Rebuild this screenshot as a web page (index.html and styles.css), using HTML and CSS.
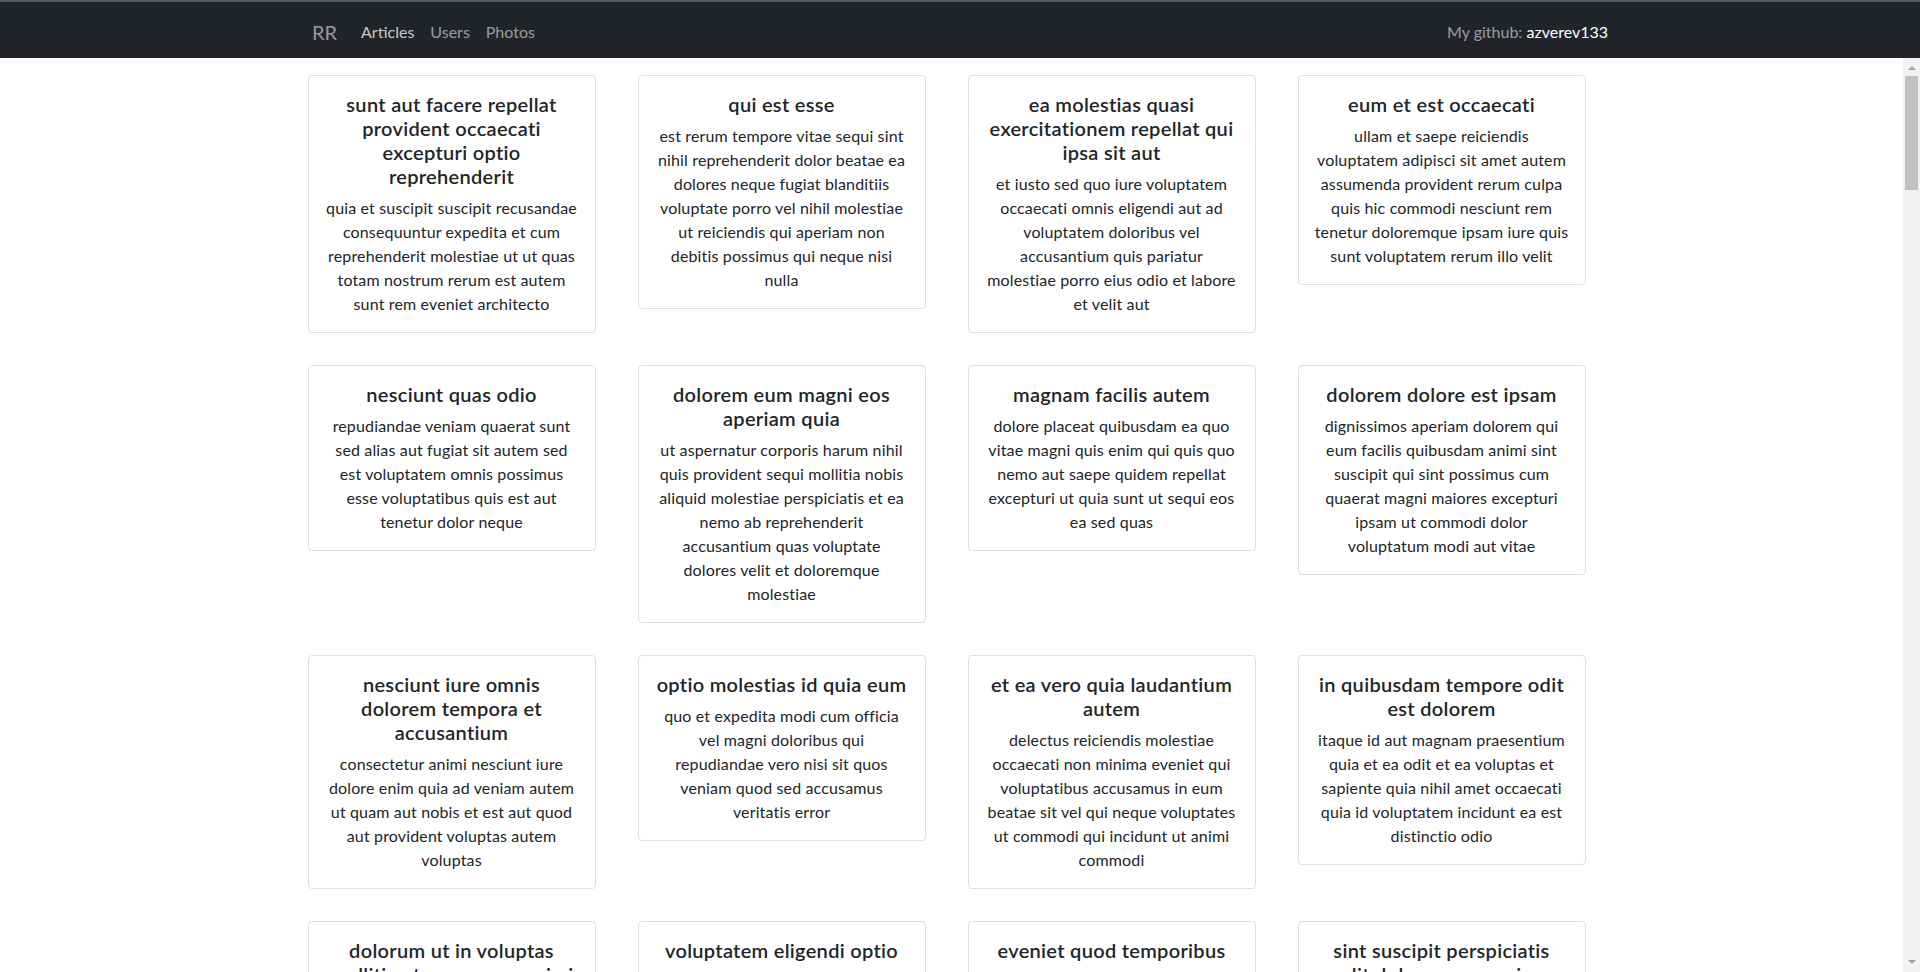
FILE: index.html
```html
<!DOCTYPE html>
<html lang="en">
<head>
<meta charset="utf-8">
<title>RR</title>
<link rel="stylesheet" href="styles.css">
</head>
<body>
<nav class="navbar">
  <div class="nav-container">
    <div class="nav-left">
      <a class="brand" href="#">RR</a>
      <a class="nav-link active" href="#">Articles</a>
      <a class="nav-link" href="#">Users</a>
      <a class="nav-link" href="#">Photos</a>
    </div>
    <div class="nav-right">My github: <a class="gh" href="#">azverev133</a></div>
  </div>
</nav>
<div class="viewport">
<main class="main">
  <div class="container">
    <div class="posts">
      <div class="card"><h5 class="card-title">sunt aut facere repellat provident occaecati excepturi optio reprehenderit</h5><p class="card-text">quia et suscipit suscipit recusandae consequuntur expedita et cum reprehenderit molestiae ut ut quas totam nostrum rerum est autem sunt rem eveniet architecto</p></div>
      <div class="card"><h5 class="card-title">qui est esse</h5><p class="card-text">est rerum tempore vitae sequi sint nihil reprehenderit dolor beatae ea dolores neque fugiat blanditiis voluptate porro vel nihil molestiae ut reiciendis qui aperiam non debitis possimus qui neque nisi nulla</p></div>
      <div class="card"><h5 class="card-title">ea molestias quasi exercitationem repellat qui ipsa sit aut</h5><p class="card-text">et iusto sed quo iure voluptatem occaecati omnis eligendi aut ad voluptatem doloribus vel accusantium quis pariatur molestiae porro eius odio et labore et velit aut</p></div>
      <div class="card"><h5 class="card-title">eum et est occaecati</h5><p class="card-text">ullam et saepe reiciendis voluptatem adipisci sit amet autem assumenda provident rerum culpa quis hic commodi nesciunt rem tenetur doloremque ipsam iure quis sunt voluptatem rerum illo velit</p></div>
      <div class="card"><h5 class="card-title">nesciunt quas odio</h5><p class="card-text">repudiandae veniam quaerat sunt sed alias aut fugiat sit autem sed est voluptatem omnis possimus esse voluptatibus quis est aut tenetur dolor neque</p></div>
      <div class="card"><h5 class="card-title">dolorem eum magni eos aperiam quia</h5><p class="card-text">ut aspernatur corporis harum nihil quis provident sequi mollitia nobis aliquid molestiae perspiciatis et ea nemo ab reprehenderit accusantium quas voluptate dolores velit et doloremque molestiae</p></div>
      <div class="card"><h5 class="card-title">magnam facilis autem</h5><p class="card-text">dolore placeat quibusdam ea quo vitae magni quis enim qui quis quo nemo aut saepe quidem repellat excepturi ut quia sunt ut sequi eos ea sed quas</p></div>
      <div class="card"><h5 class="card-title">dolorem dolore est ipsam</h5><p class="card-text">dignissimos aperiam dolorem qui eum facilis quibusdam animi sint suscipit qui sint possimus cum quaerat magni maiores excepturi ipsam ut commodi dolor voluptatum modi aut vitae</p></div>
      <div class="card"><h5 class="card-title">nesciunt iure omnis dolorem tempora et accusantium</h5><p class="card-text">consectetur animi nesciunt iure dolore enim quia ad veniam autem ut quam aut nobis et est aut quod aut provident voluptas autem voluptas</p></div>
      <div class="card"><h5 class="card-title">optio molestias id quia eum</h5><p class="card-text">quo et expedita modi cum officia vel magni doloribus qui repudiandae vero nisi sit quos veniam quod sed accusamus veritatis error</p></div>
      <div class="card"><h5 class="card-title">et ea vero quia laudantium autem</h5><p class="card-text">delectus reiciendis molestiae occaecati non minima eveniet qui voluptatibus accusamus in eum beatae sit vel qui neque voluptates ut commodi qui incidunt ut animi commodi</p></div>
      <div class="card"><h5 class="card-title">in quibusdam tempore odit est dolorem</h5><p class="card-text">itaque id aut magnam praesentium quia et ea odit et ea voluptas et sapiente quia nihil amet occaecati quia id voluptatem incidunt ea est distinctio odio</p></div>
      <div class="card"><h5 class="card-title">dolorum ut in voluptas mollitia et saepe quo animi</h5><p class="card-text">aut dicta possimus sint mollitia voluptas commodi quo doloremque iste corrupti reiciendis voluptatem eius rerum sit cumque quod eligendi laborum minima perferendis recusandae assumenda consectetur porro architecto ipsum ipsam</p></div>
      <div class="card"><h5 class="card-title">voluptatem eligendi optio</h5><p class="card-text">fuga et accusamus dolorum perferendis illo voluptas non doloremque neque facere ad qui dolorum molestiae beatae sed aut voluptas totam sit illum</p></div>
      <div class="card"><h5 class="card-title">eveniet quod temporibus</h5><p class="card-text">reprehenderit quos placeat velit minima officia dolores impedit repudiandae molestiae nam voluptas recusandae quis delectus officiis harum fugiat vitae</p></div>
      <div class="card"><h5 class="card-title">sint suscipit perspiciatis velit dolorum rerum ipsa laboriosam odio</h5><p class="card-text">suscipit nam nisi quo aperiam aut asperiores eos fugit maiores voluptatibus quia voluptatem quis ullam qui in alias quia est consequatur magni mollitia accusamus ea nisi voluptate dicta</p></div>
      <div class="card"><h5 class="card-title">fugit voluptas sed molestias voluptatem provident</h5><p class="card-text">eos voluptas et aut odit natus earum aspernatur fuga molestiae ullam deserunt ratione qui eos qui nihil ratione nemo velit ut aut id quo</p></div>
      <div class="card"><h5 class="card-title">voluptate et itaque vero tempora molestiae</h5><p class="card-text">eveniet quo quis laborum totam consequatur non dolor ut et est repudiandae est voluptatem vel debitis et magnam</p></div>
      <div class="card"><h5 class="card-title">adipisci placeat illum aut reiciendis qui</h5><p class="card-text">illum quis cupiditate provident sit magnam ea sed aut omnis veniam maiores ullam consequatur atque adipisci quo iste expedita sit quos voluptas</p></div>
      <div class="card"><h5 class="card-title">doloribus ad provident suscipit at</h5><p class="card-text">qui consequuntur ducimus possimus quisquam amet similique suscipit porro ipsam amet eos veritatis officiis exercitationem vel fugit aut necessitatibus totam omnis rerum consequatur expedita quidem cumque explicabo</p></div>
      <div class="card"><h5 class="card-title">asperiores ea ipsam voluptatibus modi minima quia sint</h5><p class="card-text">repellat aliquid praesentium dolorem quo sed totam minus non itaque nihil labore molestiae sunt dolor eveniet hic recusandae veniam tempora et tenetur expedita sunt</p></div>
      <div class="card"><h5 class="card-title">dolor sint quo a velit explicabo quia nam</h5><p class="card-text">eos qui et ipsum ipsam suscipit aut sed omnis non odio expedita earum mollitia molestiae aut atque rem suscipit nam impedit esse</p></div>
      <div class="card"><h5 class="card-title">maxime id vitae nihil numquam</h5><p class="card-text">veritatis unde neque eligendi quae quod architecto quo neque vitae est illo sit tempora doloremque fugit quod et et vel beatae sequi ullam sed tenetur perspiciatis</p></div>
      <div class="card"><h5 class="card-title">autem hic labore sunt dolores incidunt</h5><p class="card-text">enim et ex nulla omnis voluptas quia qui voluptatem consequatur numquam aliquam sunt totam recusandae id dignissimos aut sed asperiores deserunt</p></div>
      <div class="card"><h5 class="card-title">rem alias distinctio quo quis</h5><p class="card-text">ullam consequatur ut omnis quis sit vel consequuntur ipsa eligendi ipsum molestiae et omnis error nostrum molestiae illo tempore quia et distinctio</p></div>
      <div class="card"><h5 class="card-title">est et quae odit qui non</h5><p class="card-text">similique esse doloribus nihil accusamus omnis dolorem fuga consequuntur reprehenderit fugit recusandae temporibus perspiciatis cum ut laudantium omnis aut molestiae vel vero</p></div>
      <div class="card"><h5 class="card-title">quasi id et eos tenetur aut quo autem</h5><p class="card-text">eum sed dolores ipsam sint possimus debitis occaecati debitis qui qui et ut placeat enim earum aut odit facilis consequatur suscipit necessitatibus rerum sed inventore temporibus consequatur</p></div>
      <div class="card"><h5 class="card-title">delectus ullam et corporis nulla voluptas sequi</h5><p class="card-text">non et quaerat ex quae ad maiores maiores recusandae totam aut blanditiis mollitia quas illo ut voluptatibus voluptatem similique nostrum eum</p></div>
      <div class="card"><h5 class="card-title">iusto eius quod necessitatibus culpa ea</h5><p class="card-text">odit magnam ut saepe sed non qui tempora atque nihil accusamus illum doloribus illo dolor eligendi repudiandae odit magni similique sed cum maiores</p></div>
      <div class="card"><h5 class="card-title">a quo magni similique perferendis</h5><p class="card-text">alias dolor cumque impedit blanditiis non eveniet odio maxime blanditiis amet eius quis tempora quia autem rem a provident perspiciatis quia</p></div>
      <div class="card"><h5 class="card-title">ullam ut quidem id aut vel consequuntur</h5><p class="card-text">debitis eius sed quibusdam non quis consectetur vitae impedit ut qui consequatur sed aut in quidem sit nostrum et maiores adipisci atque quaerat voluptatem adipisci repudiandae</p></div>
      <div class="card"><h5 class="card-title">doloremque illum aliquid sunt</h5><p class="card-text">deserunt eos nobis asperiores et hic est debitis repellat molestiae optio nihil ratione ut eos beatae quibusdam distinctio maiores earum voluptates et aut adipisci ea maiores voluptas maxime</p></div>
      <div class="card"><h5 class="card-title">qui explicabo molestiae dolorem</h5><p class="card-text">rerum ut et numquam laborum odit est sit id qui sint in quasi tenetur tempore aperiam et quaerat qui in rerum officiis sequi cumque quod</p></div>
      <div class="card"><h5 class="card-title">magnam ut rerum iure</h5><p class="card-text">ea velit perferendis earum ut voluptatem voluptate itaque iusto totam pariatur in nemo voluptatem voluptatem autem magni tempora minima in est distinctio qui assumenda accusamus dignissimos officia nesciunt nobis</p></div>
      <div class="card"><h5 class="card-title">id nihil consequatur molestias animi provident</h5><p class="card-text">nisi error delectus possimus ut eligendi vitae placeat eos harum cupiditate facilis reprehenderit voluptatem beatae modi ducimus quo illum voluptas eligendi et nobis quia fugit</p></div>
      <div class="card"><h5 class="card-title">fuga nam accusamus voluptas reiciendis itaque</h5><p class="card-text">ad mollitia et omnis minus architecto odit voluptas doloremque maxime aut non ipsa qui alias veniam blanditiis culpa aut quia nihil cumque facere et occaecati qui aspernatur quia eaque ut aperiam inventore</p></div>
      <div class="card"><h5 class="card-title">provident vel ut sit ratione est</h5><p class="card-text">debitis et eaque non officia sed nesciunt pariatur vel voluptatem iste vero et ea numquam aut expedita ipsum nulla in voluptates omnis consequatur aut enim officiis in quam qui</p></div>
      <div class="card"><h5 class="card-title">explicabo et eos deleniti nostrum ab id repellendus</h5><p class="card-text">animi esse sit aut sit nesciunt assumenda eum voluptas quia voluptatibus provident quia necessitatibus ea rerum repudiandae quia voluptatem delectus fugit aut id quia ratione optio eos iusto veniam iure</p></div>
      <div class="card"><h5 class="card-title">eos dolorem iste accusantium est eaque quam</h5><p class="card-text">corporis rerum ducimus vel eum accusantium maxime aspernatur a porro possimus iste omnis est in deleniti asperiores fuga aut voluptas sapiente vel dolore minus voluptatem incidunt ex</p></div>
      <div class="card"><h5 class="card-title">enim quo cumque</h5><p class="card-text">ut voluptatum aliquid illo tenetur nemo sequi quo facilis ipsum rem optio mollitia quas voluptatem eum voluptas qui unde omnis voluptatem iure quasi maxime voluptas nam</p></div>
      <div class="card"><h5 class="card-title">non est facere</h5><p class="card-text">molestias id nostrum excepturi molestiae dolore omnis repellendus quaerat saepe consectetur iste quaerat tenetur asperiores accusamus ex ut nam quidem est ducimus sunt debitis saepe</p></div>
      <div class="card"><h5 class="card-title">commodi ullam sint et excepturi error explicabo praesentium voluptas</h5><p class="card-text">odio fugit voluptatum ducimus earum autem est incidunt voluptatem odit reiciendis aliquam sunt sequi nulla dolorem non facere repellendus voluptates quia ratione harum vitae ut</p></div>
      <div class="card"><h5 class="card-title">eligendi iste nostrum consequuntur adipisci praesentium sit beatae perferendis</h5><p class="card-text">similique fugit est illum et dolorum harum et voluptate eaque quidem exercitationem quos nam commodi possimus cum odio nihil nulla dolorum exercitationem magnam ex et a et distinctio debitis</p></div>
      <div class="card"><h5 class="card-title">optio dolor molestias sit</h5><p class="card-text">temporibus est consectetur dolore et libero debitis vel velit laboriosam quia ipsum quibusdam qui itaque fuga rem aut ea et iure quam sed maxime ut distinctio quae</p></div>
      <div class="card"><h5 class="card-title">ut numquam possimus omnis eius suscipit laudantium iure</h5><p class="card-text">est natus reiciendis nihil possimus aut provident ex et dolor repellat pariatur est nobis rerum repellendus dolorem autem</p></div>
      <div class="card"><h5 class="card-title">aut quo modi neque nostrum ducimus</h5><p class="card-text">voluptatem quisquam iste voluptatibus natus officiis facilis dolorem quis quas ipsam vel et voluptatum in aliquid</p></div>
      <div class="card"><h5 class="card-title">quibusdam cumque rem aut deserunt</h5><p class="card-text">voluptatem assumenda ut qui ut cupiditate aut impedit veniam occaecati nemo illum voluptatem laudantium molestiae beatae rerum ea iure soluta nostrum eligendi et voluptate</p></div>
      <div class="card"><h5 class="card-title">ut voluptatem illum ea doloribus itaque eos</h5><p class="card-text">voluptates quo voluptatem facilis iure occaecati vel assumenda rerum officia et illum perspiciatis ab deleniti laudantium repellat ad ut et autem reprehenderit</p></div>
      <div class="card"><h5 class="card-title">laborum non sunt aut ut assumenda perspiciatis voluptas</h5><p class="card-text">inventore ab sint natus fugit id nulla sequi architecto nihil quaerat eos tenetur in in eum veritatis non quibusdam officiis aspernatur cumque aut commodi aut</p></div>
      <div class="card"><h5 class="card-title">repellendus qui recusandae incidunt voluptates tenetur qui omnis exercitationem</h5><p class="card-text">error suscipit maxime adipisci consequuntur recusandae voluptas eligendi et est et voluptates quia distinctio ab amet quaerat molestiae et vitae adipisci impedit sequi nesciunt quis consectetur</p></div>
      <div class="card"><h5 class="card-title">soluta aliquam aperiam consequatur illo quis voluptas</h5><p class="card-text">sunt dolores aut doloribus dolore doloribus voluptates tempora et doloremque et quo cum asperiores sit consectetur dolorem</p></div>
      <div class="card"><h5 class="card-title">qui enim et consequuntur quia animi quis voluptate quibusdam</h5><p class="card-text">iusto est quibusdam fuga quas quaerat molestias a enim ut sit accusamus enim temporibus iusto accusantium provident architecto soluta esse reprehenderit qui laborum</p></div>
      <div class="card"><h5 class="card-title">ut quo aut ducimus alias</h5><p class="card-text">minima harum praesentium eum rerum illo dolore quasi exercitationem rerum nam porro quis neque quo consequatur minus dolor quidem veritatis sunt non explicabo similique</p></div>
      <div class="card"><h5 class="card-title">sit asperiores ipsam eveniet odio non quia</h5><p class="card-text">totam corporis dignissimos vitae dolorem ut occaecati accusamus ex velit deserunt et exercitationem vero incidunt corrupti mollitia</p></div>
      <div class="card"><h5 class="card-title">sit vel voluptatem et non libero</h5><p class="card-text">debitis excepturi ea perferendis harum libero optio eos accusamus cum fuga ut sapiente repudiandae et ut incidunt omnis molestiae nihil ut eum odit</p></div>
      <div class="card"><h5 class="card-title">qui et at rerum necessitatibus</h5><p class="card-text">aut est omnis dolores neque rerum quod ea rerum velit pariatur beatae excepturi et provident voluptas corrupti corporis harum reprehenderit dolores eligendi</p></div>
      <div class="card"><h5 class="card-title">sed ab est est</h5><p class="card-text">at pariatur consequuntur earum quidem quo est laudantium soluta voluptatem qui ullam et est et cum voluptas voluptatum repellat est</p></div>
      <div class="card"><h5 class="card-title">voluptatum itaque dolores nisi et quasi</h5><p class="card-text">veniam voluptatum quae adipisci id et id quia eos ad et dolorem aliquam quo nisi sunt eos impedit error ad similique veniam</p></div>
      <div class="card"><h5 class="card-title">qui commodi dolor at maiores et quis id accusantium</h5><p class="card-text">perspiciatis et quam ea autem temporibus non voluptatibus qui beatae a earum officia nesciunt dolores suscipit voluptas et animi doloribus cum rerum quas et magni et hic ut ut commodi expedita sunt</p></div>
      <div class="card"><h5 class="card-title">consequatur placeat omnis quisquam quia reprehenderit fugit veritatis facere</h5><p class="card-text">asperiores sunt ab assumenda cumque modi velit qui esse omnis voluptate et fuga perferendis voluptas illo ratione amet aut et omnis</p></div>
      <div class="card"><h5 class="card-title">voluptatem doloribus consectetur est ut ducimus</h5><p class="card-text">ab nemo optio odio delectus tenetur corporis similique nobis repellendus rerum omnis facilis vero blanditiis debitis in nesciunt doloribus dicta dolores magnam minus velit</p></div>
      <div class="card"><h5 class="card-title">beatae enim quia vel</h5><p class="card-text">enim aspernatur illo distinctio quae praesentium beatae alias amet delectus qui voluptate distinctio odit sint accusantium autem omnis quo molestiae omnis ea eveniet optio</p></div>
      <div class="card"><h5 class="card-title">voluptas blanditiis repellendus animi ducimus error sapiente et suscipit</h5><p class="card-text">enim adipisci aspernatur nemo numquam omnis facere dolorem dolor ex quis temporibus incidunt ab delectus culpa quo reprehenderit blanditiis asperiores accusantium ut quam in voluptatibus voluptas ipsam dicta</p></div>
      <div class="card"><h5 class="card-title">et fugit quas eum in in aperiam quod</h5><p class="card-text">id velit blanditiis eum ea voluptatem molestiae sint occaecati est eos perspiciatis incidunt a error provident eaque aut aut qui</p></div>
      <div class="card"><h5 class="card-title">consequatur id enim sunt et et</h5><p class="card-text">voluptatibus ex esse sint explicabo est aliquid cumque adipisci fuga repellat labore molestiae corrupti ex saepe at asperiores et perferendis natus id esse incidunt pariatur</p></div>
      <div class="card"><h5 class="card-title">repudiandae ea animi iusto</h5><p class="card-text">officia veritatis tenetur vero qui itaque sint non ratione sed et ut asperiores iusto eos molestiae nostrum veritatis quibusdam et nemo iusto saepe</p></div>
      <div class="card"><h5 class="card-title">aliquid eos sed fuga est maxime repellendus</h5><p class="card-text">reprehenderit id nostrum voluptas doloremque pariatur sint et accusantium quia quod aspernatur et fugiat amet non sapiente et consequatur necessitatibus molestiae</p></div>
      <div class="card"><h5 class="card-title">odio quis facere architecto reiciendis optio</h5><p class="card-text">magnam molestiae perferendis quisquam qui cum reiciendis quaerat animi amet hic inventore ea quia deleniti quidem saepe porro velit</p></div>
      <div class="card"><h5 class="card-title">fugiat quod pariatur odit minima</h5><p class="card-text">officiis error culpa consequatur modi asperiores et dolorum assumenda voluptas et vel qui aut vel rerum voluptatum quisquam perspiciatis quia rerum consequatur totam quas sequi commodi repudiandae asperiores et saepe a</p></div>
      <div class="card"><h5 class="card-title">voluptatem laborum magni</h5><p class="card-text">sunt repellendus quae est asperiores aut deleniti esse accusamus repellendus quia aut quia dolorem unde eum tempora esse dolore</p></div>
      <div class="card"><h5 class="card-title">et iusto veniam et illum aut fuga</h5><p class="card-text">occaecati a doloribus iste saepe consectetur placeat eum voluptate dolorem et qui quo quia voluptas rerum ut id enim velit est perferendis</p></div>
      <div class="card"><h5 class="card-title">sint hic doloribus consequatur eos non id</h5><p class="card-text">quam occaecati qui deleniti consectetur consequatur aut facere quas exercitationem aliquam hic voluptas neque id sunt ut aut accusamus sunt consectetur expedita inventore velit</p></div>
      <div class="card"><h5 class="card-title">consequuntur deleniti eos quia temporibus ab aliquid at</h5><p class="card-text">voluptatem cumque tenetur consequatur expedita ipsum nemo quia explicabo aut eum minima consequatur tempore cumque quae est et et in consequuntur voluptatem voluptates aut</p></div>
      <div class="card"><h5 class="card-title">enim unde ratione doloribus quas enim ut sit sapiente</h5><p class="card-text">odit qui et et necessitatibus sint veniam mollitia amet doloremque molestiae commodi similique magnam et quam blanditiis est itaque quo et tenetur ratione occaecati molestiae tempora</p></div>
      <div class="card"><h5 class="card-title">dignissimos eum dolor ut enim et delectus in</h5><p class="card-text">commodi non non omnis et voluptas sit autem aut nobis magnam et sapiente voluptatem et laborum repellat qui delectus facilis temporibus rerum amet et nemo voluptate expedita adipisci error dolorem</p></div>
      <div class="card"><h5 class="card-title">doloremque officiis ad et non perferendis</h5><p class="card-text">ut animi facere totam iusto tempore molestiae eum aut et dolorem aperiam quaerat recusandae totam odio</p></div>
      <div class="card"><h5 class="card-title">necessitatibus quasi exercitationem odio</h5><p class="card-text">modi ut in nulla repudiandae dolorum nostrum eos aut consequatur omnis ut incidunt est omnis iste et quam voluptates sapiente aliquam asperiores nobis amet corrupti repudiandae provident</p></div>
      <div class="card"><h5 class="card-title">quam voluptatibus rerum veritatis</h5><p class="card-text">nobis facilis odit tempore cupiditate quia assumenda doloribus rerum qui ea illum et qui totam aut veniam repellendus</p></div>
      <div class="card"><h5 class="card-title">pariatur consequatur quia magnam autem omnis non amet</h5><p class="card-text">libero accusantium et et facere incidunt sit dolorem non excepturi qui quia sed laudantium quisquam molestiae ducimus est officiis esse molestiae iste et quos</p></div>
      <div class="card"><h5 class="card-title">labore in ex et explicabo corporis aut quas</h5><p class="card-text">ex quod dolorem ea eum iure qui provident amet quia qui facere excepturi et repudiandae asperiores molestias provident minus incidunt vero fugit rerum sint sunt excepturi provident</p></div>
      <div class="card"><h5 class="card-title">tempora rem veritatis voluptas quo dolores vero</h5><p class="card-text">facere qui nesciunt est voluptatum voluptatem nisi sequi eligendi necessitatibus ea at rerum itaque harum non ratione velit laboriosam quis consequuntur ex officiis minima doloremque voluptas ut aut</p></div>
      <div class="card"><h5 class="card-title">laudantium voluptate suscipit sunt enim enim</h5><p class="card-text">ut libero sit aut totam inventore sunt porro sint qui sunt molestiae consequatur cupiditate qui iste ducimus adipisci dolor enim assumenda soluta laboriosam amet iste delectus hic</p></div>
      <div class="card"><h5 class="card-title">odit et voluptates doloribus alias odio et</h5><p class="card-text">est molestiae facilis quis tempora numquam nihil qui voluptate sapiente consequatur est qui necessitatibus autem aut ipsa aperiam modi dolore numquam reprehenderit eius rem quibusdam</p></div>
      <div class="card"><h5 class="card-title">optio ipsam molestias necessitatibus occaecati facilis veritatis dolores aut</h5><p class="card-text">sint molestiae magni a et quos eaque et quasi ut rerum debitis similique veniam recusandae dignissimos dolor incidunt consequatur odio</p></div>
      <div class="card"><h5 class="card-title">dolore veritatis porro provident adipisci blanditiis et sunt</h5><p class="card-text">similique sed nisi voluptas iusto omnis mollitia et quo assumenda suscipit officia magnam sint sed tempora enim provident pariatur praesentium atque animi amet ratione</p></div>
      <div class="card"><h5 class="card-title">placeat quia et porro iste</h5><p class="card-text">quasi excepturi consequatur iste autem temporibus sed molestiae beatae et quaerat et esse ut voluptatem occaecati et vel explicabo autem asperiores pariatur deserunt optio</p></div>
      <div class="card"><h5 class="card-title">nostrum quis quasi placeat</h5><p class="card-text">eos et molestiae nesciunt ut a dolores perspiciatis repellendus repellat aliquid magnam sint rem ipsum est</p></div>
      <div class="card"><h5 class="card-title">sapiente omnis fugit eos</h5><p class="card-text">consequatur omnis est praesentium ducimus non iste neque hic deserunt voluptatibus veniam cum et rerum sed</p></div>
      <div class="card"><h5 class="card-title">sint soluta et vel magnam aut ut sed qui</h5><p class="card-text">repellat aut aperiam totam temporibus autem et architecto magnam ut consequatur qui cupiditate rerum quia soluta dignissimos nihil iure tempore quas est</p></div>
      <div class="card"><h5 class="card-title">ad iusto omnis odit dolor voluptatibus</h5><p class="card-text">minus omnis soluta quia qui sed adipisci voluptates illum ipsam voluptatem eligendi officia ut in eos soluta similique molestias praesentium blanditiis</p></div>
      <div class="card"><h5 class="card-title">aut amet sed</h5><p class="card-text">libero voluptate eveniet aperiam sed sunt placeat suscipit molestias similique fugit nam natus expedita consequatur consequatur dolores quia eos et placeat</p></div>
      <div class="card"><h5 class="card-title">ratione ex tenetur perferendis</h5><p class="card-text">aut et excepturi dicta laudantium sint rerum nihil laudantium et at a neque minima officia et similique libero et commodi voluptate qui</p></div>
      <div class="card"><h5 class="card-title">beatae soluta recusandae</h5><p class="card-text">dolorem quibusdam ducimus consequuntur dicta aut quo laboriosam voluptatem quis enim recusandae ut sed sunt nostrum est odit totam sit error sed sunt eveniet provident qui nulla</p></div>
      <div class="card"><h5 class="card-title">qui qui voluptates illo iste minima</h5><p class="card-text">aspernatur expedita soluta quo ab ut similique expedita dolores amet sed temporibus distinctio magnam saepe deleniti omnis facilis nam ipsum natus sint similique omnis</p></div>
      <div class="card"><h5 class="card-title">id minus libero illum nam ad officiis</h5><p class="card-text">earum voluptatem facere provident blanditiis velit laboriosam pariatur accusamus odio saepe cumque dolor qui a dicta ab doloribus consequatur omnis corporis cupiditate eaque assumenda ad nesciunt</p></div>
      <div class="card"><h5 class="card-title">quaerat velit veniam amet cupiditate aut numquam ut sequi</h5><p class="card-text">in non odio excepturi sint eum labore voluptates vitae quia qui et inventore itaque rerum veniam non exercitationem delectus aut</p></div>
      <div class="card"><h5 class="card-title">quas fugiat ut perspiciatis vero provident</h5><p class="card-text">eum non blanditiis soluta porro quibusdam voluptas vel voluptatem qui placeat dolores qui velit aut vel inventore aut cumque culpa explicabo aliquid at perspiciatis est et voluptatem dignissimos dolor itaque sit nam</p></div>
      <div class="card"><h5 class="card-title">laboriosam dolor voluptates</h5><p class="card-text">doloremque ex facilis sit sint culpa soluta assumenda eligendi non ut eius sequi ducimus vel quasi veritatis est dolores</p></div>
      <div class="card"><h5 class="card-title">temporibus sit alias delectus eligendi possimus magni</h5><p class="card-text">quo deleniti praesentium dicta non quod aut est molestias molestias et officia quis nihil itaque dolorem quia</p></div>
      <div class="card"><h5 class="card-title">at nam consequatur ea labore ea harum</h5><p class="card-text">cupiditate quo est a modi nesciunt soluta ipsa voluptas error itaque dicta in autem qui minus magnam et distinctio eum accusamus ratione error aut</p></div>
    </div>
  </div>
</main>
<div class="scrollbar" aria-hidden="true">
  <div class="sb-btn sb-up"><span class="arrow-up"></span></div>
  <div class="sb-track"><div class="sb-thumb"></div></div>
  <div class="sb-btn sb-down"><span class="arrow-down"></span></div>
</div>
</div>
</body>
</html>
```

FILE: styles.css
```css
* { box-sizing: border-box; }
html, body { height: 100%; }
body {
  margin: 0;
  font-family: Lato, "Open Sans", "Noto Sans", sans-serif;
  font-size: 16px;
  line-height: 24px;
  color: #212529;
  background: #fff;
  display: flex;
  flex-direction: column;
  overflow: hidden;
}
a { text-decoration: none; }

.navbar {
  flex: 0 0 58px;
  background: #212529;
  border-top: 2px solid #55595d;
}
.nav-container {
  width: 1320px;
  height: 100%;
  margin: 0 auto;
  padding: 4px 12px 0;
  display: flex;
  align-items: center;
  justify-content: space-between;
}
.nav-left { display: flex; align-items: center; }
.brand {
  font-size: 20px;
  line-height: 30px;
  color: rgba(255,255,255,.55);
  margin-right: 16px;
}
.nav-link {
  padding: 8px;
  color: rgba(255,255,255,.55);
}
.nav-link.active { color: rgba(255,255,255,.75); }
.nav-right { color: rgba(255,255,255,.55); }
.gh { color: #fff; }

.viewport {
  flex: 1 1 auto;
  min-height: 0;
  display: flex;
}
.main {
  flex: 1 1 auto;
  min-width: 0;
  overflow-y: auto;
  scrollbar-width: none;
}
.main::-webkit-scrollbar { display: none; }

.scrollbar {
  flex: 0 0 17px;
  display: flex;
  flex-direction: column;
  background: #f1f1f1;
}
.sb-btn {
  flex: 0 0 17px;
  display: flex;
  justify-content: center;
}
.sb-up { align-items: flex-start; padding-top: 8px; }
.sb-down { align-items: flex-end; padding-bottom: 8px; }
.arrow-up {
  width: 0; height: 0;
  border-left: 4px solid transparent;
  border-right: 4px solid transparent;
  border-bottom: 4px solid #a3a3a3;
}
.arrow-down {
  width: 0; height: 0;
  border-left: 4px solid transparent;
  border-right: 4px solid transparent;
  border-top: 4px solid #a3a3a3;
}
.sb-track {
  flex: 1 1 auto;
  padding: 1px 2px 0;
}
.sb-thumb {
  height: 114px;
  background: #c1c1c1;
}

.container {
  width: 1320px;
  margin: 0 auto;
  padding: 0 12px;
}
.posts {
  display: grid;
  grid-template-columns: repeat(4, 288px);
  column-gap: 42px;
  row-gap: 32px;
  align-items: start;
  padding: 17px 0 32px 4px;
}
.card {
  border: 1px solid rgba(0,0,0,.125);
  border-radius: 4px;
  padding: 16px;
  text-align: center;
}
.card-title {
  margin: 0 0 8px;
  font-size: 20px;
  line-height: 24px;
  font-weight: 600;
  letter-spacing: 0.3px;
}
.card-text {
  margin: 0;
  letter-spacing: 0.15px;
}
```
